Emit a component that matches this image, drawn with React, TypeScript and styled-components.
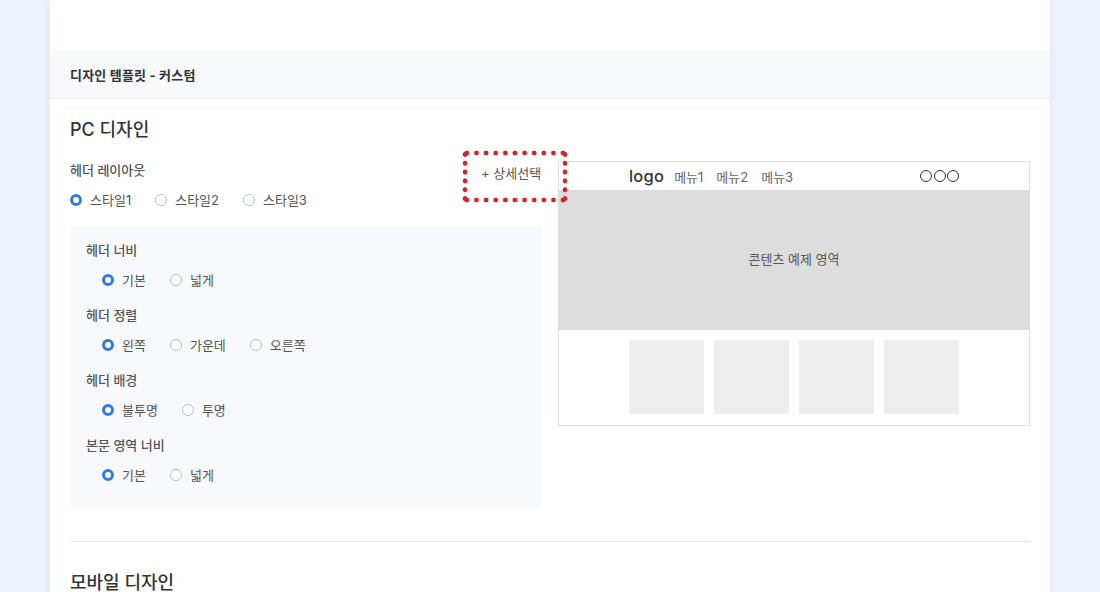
import React from "react";
import styled, { createGlobalStyle } from "styled-components";

const GlobalStyle = createGlobalStyle`
  * { box-sizing: border-box; }
  html, body { margin: 0; padding: 0; }
  body {
    background: #eef2fa;
    font-family: Inter, "Noto Sans CJK KR", "Noto Sans", sans-serif;
    color: #333;
  }
`;

const Card = styled.div`
  width: 1000px;
  margin: 0 auto;
  background: #fff;
  box-shadow: 0 0 8px rgba(40, 60, 110, 0.08);
  min-height: 700px;
`;

const TopSpace = styled.div`
  height: 50px;
`;

const CardHeader = styled.div`
  height: 49px;
  padding: 0 20px;
  display: flex;
  align-items: center;
  background: #f8f9fb;
  border-bottom: 1px solid #eceef2;
  font-size: 13px;
  font-weight: 700;
  letter-spacing: 0.2px;
  color: #333;
`;

const Body = styled.div`
  padding: 18px 20px 0;
`;

const SectionTitle = styled.h2`
  margin: 0;
  font-size: 18px;
  font-weight: 500;
  line-height: 26px;
  color: #333;
`;

const Columns = styled.div`
  display: grid;
  grid-template-columns: 1fr 1fr;
  gap: 16px;
  margin-top: 18px;
  align-items: start;
`;

const LeftCol = styled.div`
  display: flex;
  flex-direction: column;
`;

const LabelRow = styled.div`
  display: flex;
  align-items: flex-start;
`;

const GroupLabel = styled.div`
  font-size: 13px;
  font-weight: 500;
  line-height: 18px;
  color: #555;
`;

const dot = "radial-gradient(circle at center, #d4222a 2.1px, rgba(212,34,42,0) 2.7px)";

const DetailButton = styled.button`
  position: relative;
  z-index: 2;
  width: 106px;
  height: 53px;
  margin: -11px -26px -24px auto;
  padding: 13px 26px 21px 19px;
  border: none;
  background:
    ${dot} left top / 9.6px 6px,
    ${dot} left bottom / 9.6px 6px,
    ${dot} left top / 6px 9.6px,
    ${dot} right top / 6px 9.6px;
  background-repeat: round no-repeat, round no-repeat, no-repeat round, no-repeat round;
  font-family: inherit;
  font-size: 13px;
  line-height: 18px;
  color: #555;
  white-space: nowrap;
  text-align: left;
  cursor: pointer;
`;

const RadioRow = styled.div<{ $indent?: number }>`
  display: flex;
  align-items: center;
  gap: 24px;
  margin-top: 12px;
  padding-left: ${(p) => p.$indent ?? 0}px;
`;

const RadioItem = styled.label`
  display: flex;
  align-items: center;
  gap: 8px;
  font-size: 13px;
  line-height: 18px;
  color: #555;
  cursor: pointer;
`;

const RadioDot = styled.span<{ $checked?: boolean }>`
  width: 12px;
  height: 12px;
  border-radius: 50%;
  flex: none;
  background: #fff;
  border: ${(p) => (p.$checked ? "3.5px solid #2f7be0" : "1px solid #b9bdc4")};
`;

const OptionsBox = styled.div`
  margin-top: 17px;
  background: #f8f9fc;
  border-radius: 6px;
  padding: 15px 16px 24px;
  display: flex;
  flex-direction: column;
  gap: 17px;
`;

const OptionGroup = styled.div`
  display: flex;
  flex-direction: column;
`;

const Preview = styled.div`
  border: 1px solid #dde1e6;
  background: #fff;
`;

const PreviewHeader = styled.div`
  height: 28px;
  display: flex;
  justify-content: center;
`;

const Inner = styled.div`
  width: 330px;
  display: flex;
  align-items: center;
`;

const Logo = styled.span`
  font-size: 16.5px;
  font-weight: 500;
  letter-spacing: 0.2px;
  color: #333;
  margin-right: 10px;
`;

const MenuItem = styled.span`
  font-size: 13px;
  color: #666;
  margin-right: 13px;
`;

const Dots = styled.div`
  margin-left: auto;
  display: flex;
  gap: 1.5px;
`;

const Dot = styled.span`
  width: 12px;
  height: 12px;
  border-radius: 50%;
  border: 1.2px solid #333;
`;

const ContentArea = styled.div`
  height: 140px;
  background: #dddddd;
  display: flex;
  align-items: center;
  justify-content: center;
  font-size: 13px;
  color: #555;
  padding-bottom: 4px;
`;

const Thumbs = styled.div`
  display: flex;
  justify-content: center;
  gap: 10px;
  padding: 10px 0 11px;
`;

const Thumb = styled.div`
  width: 75px;
  height: 74px;
  background: #eeeeee;
`;

const Divider = styled.hr`
  border: none;
  border-top: 1px solid #e3e5e8;
  margin: 33px 0 28px;
`;

type Opt = { label: string; checked?: boolean };

const Radios = ({ options, indent }: { options: Opt[]; indent?: number }) => (
  <RadioRow $indent={indent}>
    {options.map((o) => (
      <RadioItem key={o.label}>
        <RadioDot $checked={o.checked} />
        {o.label}
      </RadioItem>
    ))}
  </RadioRow>
);

const groups: { title: string; options: Opt[] }[] = [
  { title: "헤더 너비", options: [{ label: "기본", checked: true }, { label: "넓게" }] },
  {
    title: "헤더 정렬",
    options: [{ label: "왼쪽", checked: true }, { label: "가운데" }, { label: "오른쪽" }],
  },
  { title: "헤더 배경", options: [{ label: "불투명", checked: true }, { label: "투명" }] },
  { title: "본문 영역 너비", options: [{ label: "기본", checked: true }, { label: "넓게" }] },
];

export default function App() {
  return (
    <>
      <GlobalStyle />
      <Card>
        <TopSpace />
        <CardHeader>디자인 템플릿 - 커스텀</CardHeader>
        <Body>
          <SectionTitle>PC 디자인</SectionTitle>
          <Columns>
            <LeftCol>
              <LabelRow>
                <GroupLabel>헤더 레이아웃</GroupLabel>
                <DetailButton>+ 상세선택</DetailButton>
              </LabelRow>
              <Radios
                options={[{ label: "스타일1", checked: true }, { label: "스타일2" }, { label: "스타일3" }]}
              />
              <OptionsBox>
                {groups.map((g) => (
                  <OptionGroup key={g.title}>
                    <GroupLabel>{g.title}</GroupLabel>
                    <Radios options={g.options} indent={16} />
                  </OptionGroup>
                ))}
              </OptionsBox>
            </LeftCol>
            <Preview>
              <PreviewHeader>
                <Inner>
                  <Logo>logo</Logo>
                  <MenuItem>메뉴1</MenuItem>
                  <MenuItem>메뉴2</MenuItem>
                  <MenuItem>메뉴3</MenuItem>
                  <Dots>
                    <Dot />
                    <Dot />
                    <Dot />
                  </Dots>
                </Inner>
              </PreviewHeader>
              <ContentArea>콘텐츠 예제 영역</ContentArea>
              <Thumbs>
                <Thumb />
                <Thumb />
                <Thumb />
                <Thumb />
              </Thumbs>
            </Preview>
          </Columns>
          <Divider />
          <SectionTitle>모바일 디자인</SectionTitle>
        </Body>
      </Card>
    </>
  );
}
